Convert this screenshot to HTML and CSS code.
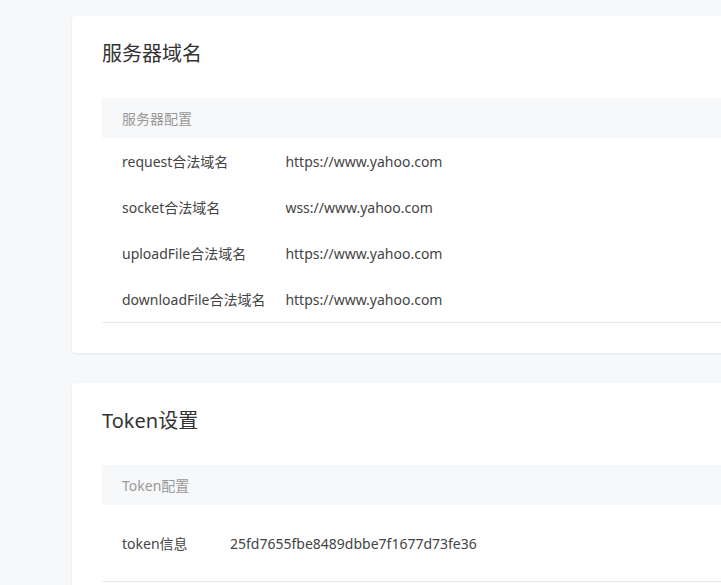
FILE: index.html
```html
<!DOCTYPE html>
<html lang="zh-CN">
<head>
    <meta charset="UTF-8">
    <meta name="viewport" content="width=device-width, initial-scale=1.0">
    <title>开发设置</title>
    <link rel="stylesheet" href="styles.css">
</head>
<body>
    <div class="main">
        <div class="card">
            <h2 class="card-title">服务器域名</h2>
            <table class="info-table domain-table">
                <tr class="head">
                    <td colspan="2">服务器配置</td>
                </tr>
                <tr>
                    <td class="label">request合法域名</td>
                    <td>https://www.yahoo.com</td>
                </tr>
                <tr>
                    <td class="label">socket合法域名</td>
                    <td>wss://www.yahoo.com</td>
                </tr>
                <tr>
                    <td class="label">uploadFile合法域名</td>
                    <td>https://www.yahoo.com</td>
                </tr>
                <tr class="last">
                    <td class="label">downloadFile合法域名</td>
                    <td>https://www.yahoo.com</td>
                </tr>
            </table>
        </div>

        <div class="card">
            <h2 class="card-title">Token设置</h2>
            <table class="info-table token-table">
                <tr class="head">
                    <td colspan="2">Token配置</td>
                </tr>
                <tr class="last tall">
                    <td class="label">token信息</td>
                    <td>25fd7655fbe8489dbbe7f1677d73fe36</td>
                </tr>
            </table>
        </div>
    </div>
</body>
</html>
```

FILE: styles.css
```css
html, body {
    margin: 0;
    padding: 0;
    overflow: hidden;
}
body {
    font-family: "Noto Sans", "Noto Sans CJK SC", sans-serif;
    background-color: #f7f8fa;
    color: #333;
}
.main {
    padding: 16px 0 0 72px;
    display: flex;
    flex-direction: column;
    gap: 30px;
    width: 900px;
}
.card {
    background-color: #fff;
    border-radius: 4px;
    box-shadow: 0 1px 3px rgba(0, 0, 0, 0.08);
    padding: 24px 30px 30px;
}
.card-title {
    margin: 0 0 30px;
    font-size: 20px;
    font-weight: normal;
    line-height: 28px;
    color: #333;
}
.info-table {
    width: 100%;
    border-collapse: collapse;
    font-size: 14px;
}
.info-table td {
    padding: 0 20px;
    height: 46px;
    color: #444;
    white-space: nowrap;
}
.info-table .head td {
    height: 40px;
    background-color: #f7f8fa;
    color: #999;
}
.info-table .last td {
    border-bottom: 1px solid #e8e8e8;
}
.info-table .tall td {
    height: 76px;
}
.info-table .label {
    padding-right: 0;
}
.domain-table .label {
    width: 1%;
}
.token-table .label {
    width: 88px;
}
```
